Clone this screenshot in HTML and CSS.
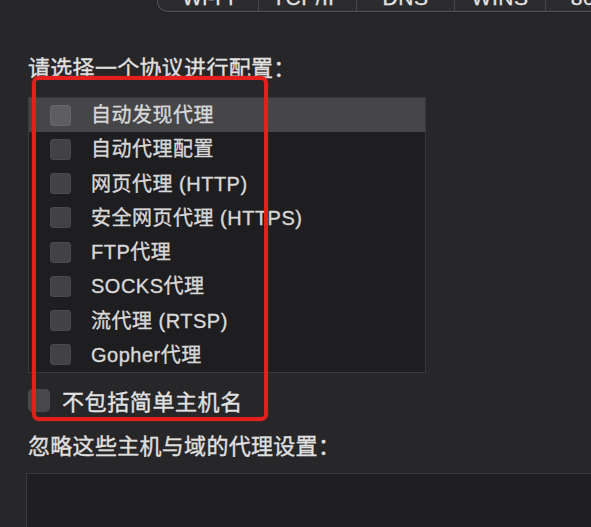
FILE: index.html
```html
<!DOCTYPE html>
<html lang="zh-CN">
<head>
<meta charset="utf-8">
<title>代理</title>
<link rel="stylesheet" href="styles.css">
</head>
<body>
<div class="page">
  <div class="tabs">
    <div class="tab tab-first">Wi-Fi</div>
    <div class="tab">TCP/IP</div>
    <div class="tab">DNS</div>
    <div class="tab tab-narrow">WINS</div>
    <div class="tab tab-last">802.1X</div>
  </div>

  <div class="label label-protocol">请选择一个协议进行配置<span class="colon">：</span></div>

  <div class="list">
    <div class="row row-selected"><span class="box"></span><span class="text">自动发现代理</span></div>
    <div class="row"><span class="box"></span><span class="text">自动代理配置</span></div>
    <div class="row"><span class="box"></span><span class="text">网页代理 (HTTP)</span></div>
    <div class="row"><span class="box"></span><span class="text">安全网页代理 (HTTPS)</span></div>
    <div class="row"><span class="box"></span><span class="text">FTP代理</span></div>
    <div class="row"><span class="box"></span><span class="text">SOCKS代理</span></div>
    <div class="row"><span class="box"></span><span class="text">流代理 (RTSP)</span></div>
    <div class="row"><span class="box"></span><span class="text">Gopher代理</span></div>
  </div>

  <div class="check">
    <span class="box box-large"></span>
    <span class="check-text">不包括简单主机名</span>
  </div>

  <div class="label label-ignore">忽略这些主机与域的代理设置<span class="colon">：</span></div>

  <div class="textarea"></div>

  <div class="highlight"></div>
</div>
</body>
</html>
```

FILE: styles.css
```css
* {
  box-sizing: border-box;
}

html, body {
  margin: 0;
  padding: 0;
  background: #272628;
  overflow: hidden;
}

body {
  width: 591px;
  height: 527px;
  font-family: "Liberation Sans", "Noto Sans CJK SC", sans-serif;
  color: #dcdcdc;
}

.page {
  position: relative;
  width: 591px;
  height: 527px;
  padding-left: 28px;
  overflow: hidden;
}

.tabs {
  display: flex;
  margin-top: -16px;
  margin-left: 129px;
  margin-right: -40px;
  height: 28px;
  border: 1px solid #58575a;
  border-top: none;
  border-radius: 0 0 10px 10px;
  background: #2c2b2d;
  box-shadow: 0 1px 0 #1c1b1d;
}

.tab {
  width: 98px;
  flex: none;
  text-align: center;
  font-size: 21px;
  line-height: 27px;
  color: #e4e4e4;
  letter-spacing: 0.5px;
  border-left: 1px solid #48474a;
  -webkit-text-stroke: 0.3px currentColor;
}

.tab-first {
  width: 100px;
  border-left: none;
}

.tab-narrow {
  width: 91px;
}

.tab-last {
  width: 120px;
}

.label {
  height: 26px;
  font-size: 22px;
  line-height: 26px;
  letter-spacing: 0.3px;
  color: #e0e0e0;
  white-space: nowrap;
  -webkit-text-stroke: 0.35px currentColor;
}

.colon {
  font-family: "Noto Sans CJK TC", sans-serif;
  line-height: 1;
}

.label-protocol {
  margin-top: 43px;
}

.list {
  margin-top: 16px;
  width: 398px;
  height: 276px;
  border: 1px solid #3a393c;
  background: #1e1d1f;
}

.row {
  display: flex;
  align-items: center;
  height: 34.25px;
  padding-left: 21px;
}

.row-selected {
  background: #464548;
}

.box {
  flex: none;
  width: 21px;
  height: 21px;
  border-radius: 4px;
  background: #424144;
  box-shadow: inset 0 0 0 1px #4a494c;
}

.row-selected .box {
  background: #5e5d60;
  box-shadow: inset 0 0 0 1px #676669;
}

.text {
  margin-left: 20px;
  margin-bottom: 3px;
  font-size: 20px;
  letter-spacing: 0.5px;
  color: #d8d8d8;
  white-space: nowrap;
  -webkit-text-stroke: 0.35px currentColor;
}

.check {
  display: flex;
  align-items: center;
  margin-top: 13px;
  height: 28px;
}

.box-large {
  width: 22px;
  height: 23px;
  border-radius: 5px;
  background: #49484b;
}

.check-text {
  margin-left: 12px;
  font-size: 22px;
  letter-spacing: 0.6px;
  color: #e2e2e2;
  white-space: nowrap;
  -webkit-text-stroke: 0.35px currentColor;
}

.label-ignore {
  margin-top: 19px;
}

.textarea {
  margin-top: 14px;
  margin-left: -2px;
  margin-right: -20px;
  height: 100px;
  border: 1px solid #3b3a3d;
  background: #1f1e20;
}

.highlight {
  position: absolute;
  left: 32px;
  top: 76px;
  width: 236px;
  height: 345px;
  border: 4px solid #e3201b;
  border-radius: 7px;
  box-shadow: 0 0 2px rgba(227, 32, 27, 0.6);
}
```
